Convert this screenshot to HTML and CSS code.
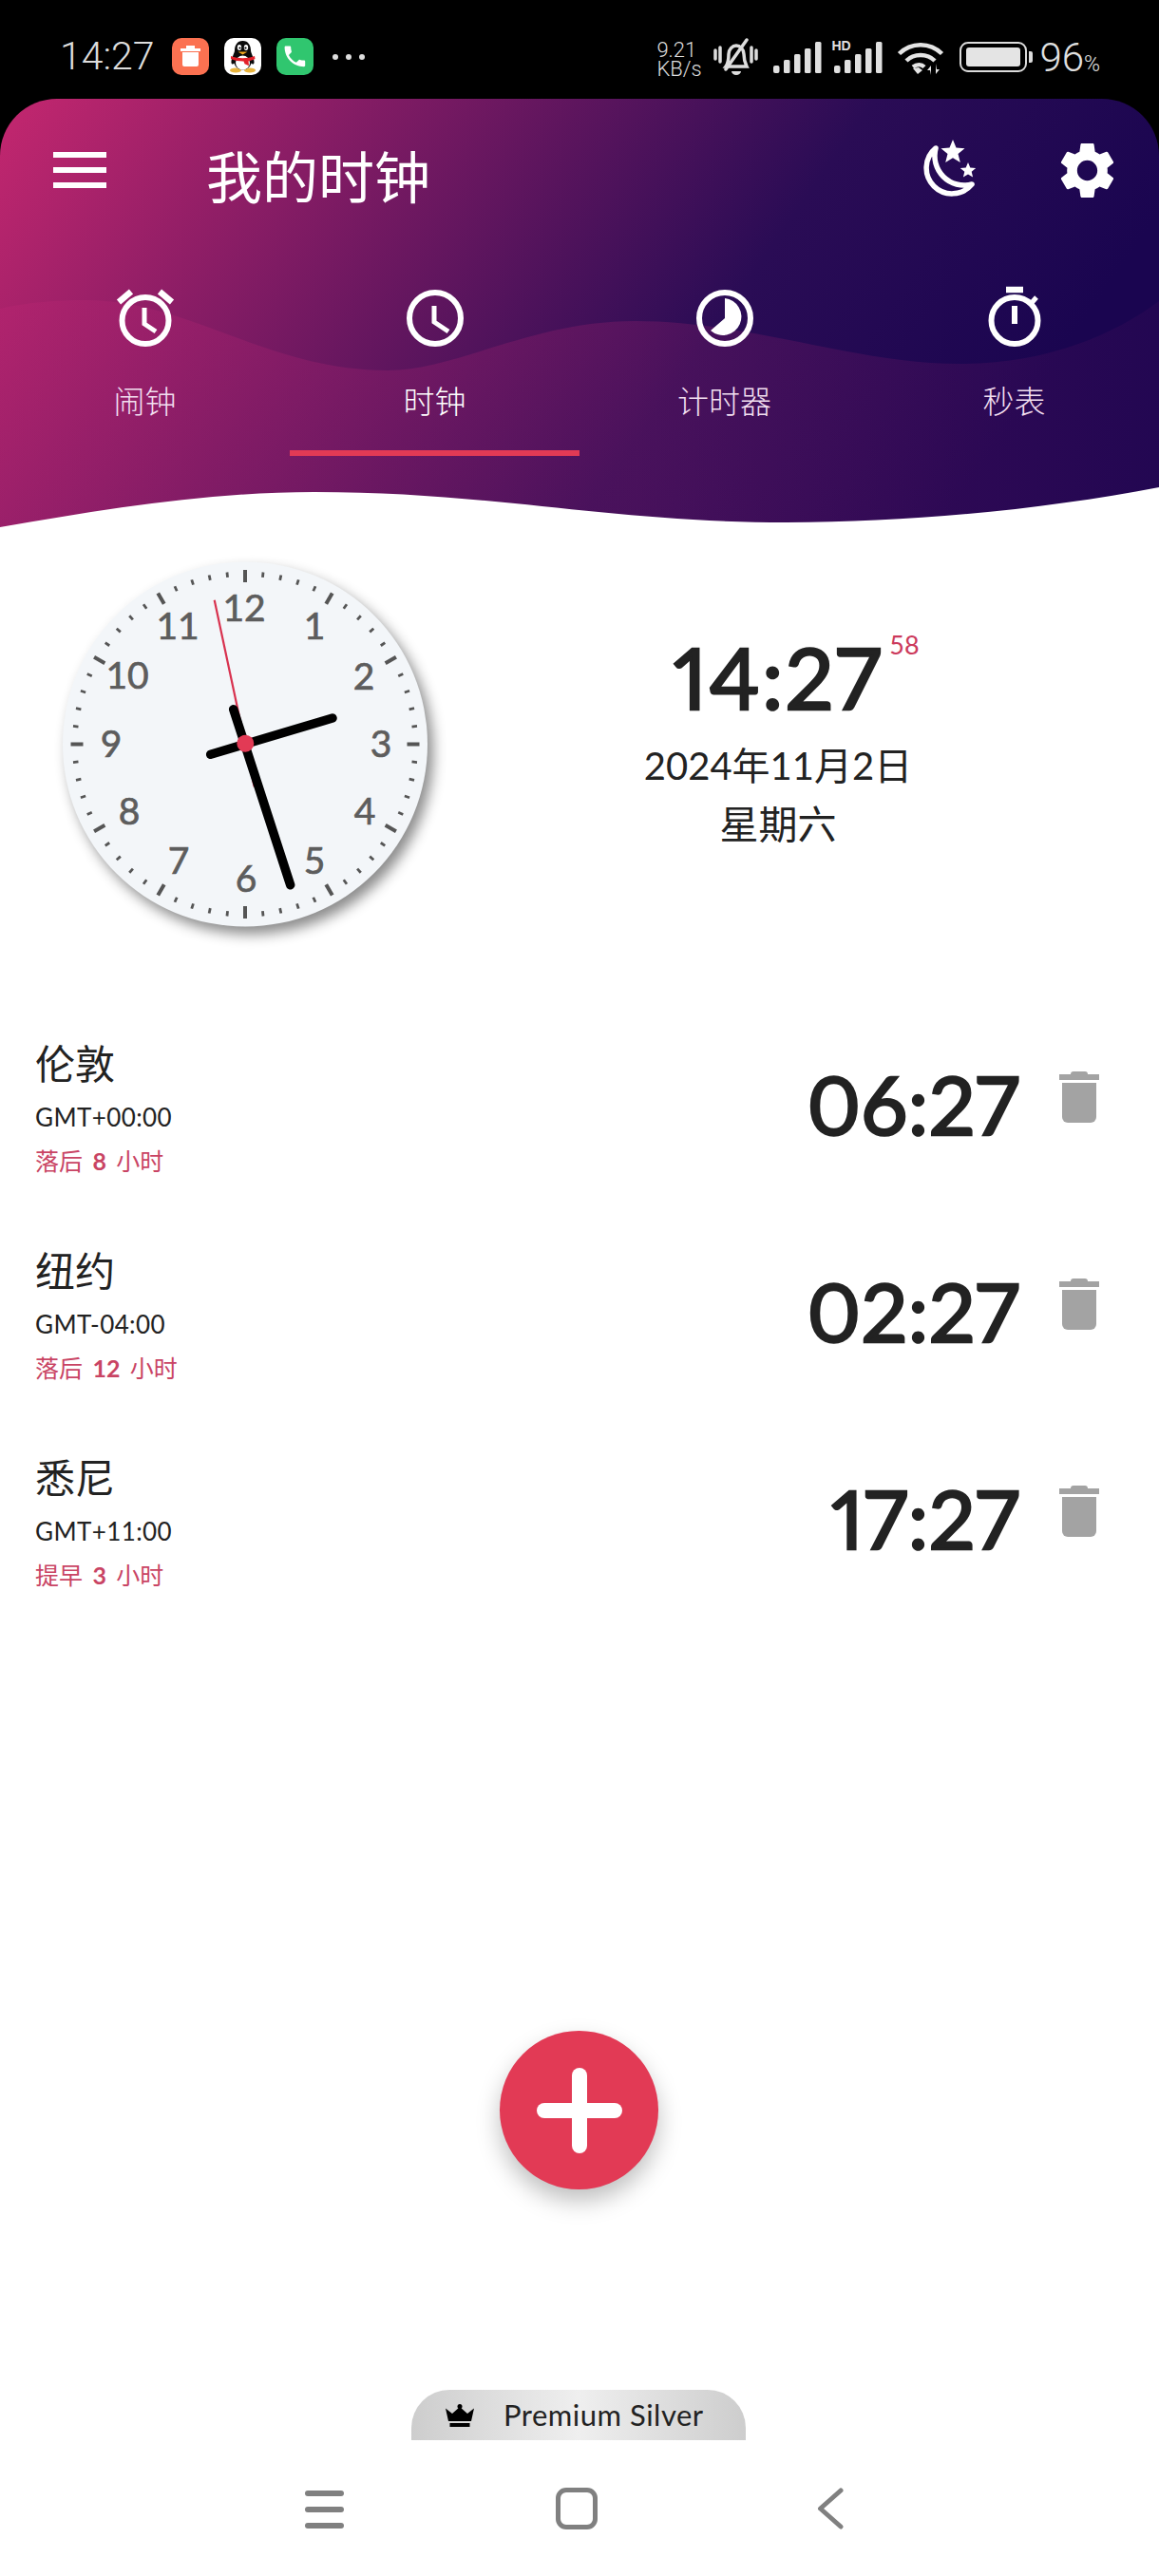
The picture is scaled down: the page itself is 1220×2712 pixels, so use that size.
FILE: index.html
```html
<!DOCTYPE html>
<html lang="zh">
<head>
<meta charset="utf-8">
<title>我的时钟</title>
<link rel="stylesheet" href="styles.css">
</head>
<body>
<div class="phone">
  <div class="top">
  <div class="status">
    <div class="status-left">
      <span class="status-time">14:27</span>
      <div class="apps">
        <svg class="app" viewBox="0 0 39 39"><rect width="39" height="39" rx="10" fill="#fb7151"/><path d="M15 8h9v3h6v3H9v-3h6z" fill="#fff"/><path d="M11 15h17v13a2 2 0 0 1-2 2H13a2 2 0 0 1-2-2z" fill="#fff"/></svg>
        <svg class="app" viewBox="0 0 39 39"><rect width="39" height="39" rx="10" fill="#fff"/><ellipse cx="12" cy="34" rx="6" ry="2.5" fill="#e9b43c"/><ellipse cx="27" cy="34" rx="6" ry="2.5" fill="#e9b43c"/><path d="M19.500 3c6 0 8.500 5 8.500 10 0 3 4 9 3.500 13-.3 2-2 2-3 .5-1 4-4.500 7-9 7s-8-3-9-7c-1 1.500-2.700 1.500-3-.5-.5-4 3.500-10 3.500-13 0-5 2.500-10 8.500-10z" fill="#0b0b0b"/><ellipse cx="19.500" cy="26" rx="7.500" ry="7.500" fill="#fff"/><ellipse cx="16" cy="10" rx="2.200" ry="3" fill="#fff"/><ellipse cx="23" cy="10" rx="2.200" ry="3" fill="#fff"/><circle cx="16.500" cy="10.500" r="1.100" fill="#000"/><circle cx="22.500" cy="10.500" r="1.100" fill="#000"/><path d="M14.500 14.500h10l-5 3z" fill="#f2a81d"/><path d="M7 19c8 3 17 3 25 0l.5 3c-3 1.500-5 2-7 2.300l.5 5-4.500-2-1-2.800c-5 0-9-.5-13.500-2.500z" fill="#e3212b"/></svg>
        <svg class="app" viewBox="0 0 39 39"><rect width="39" height="39" rx="10" fill="#30c66f"/><path transform="translate(5 5) scale(1.200)" d="M6.620 10.790c1.440 2.830 3.760 5.140 6.590 6.590l2.200-2.200c.27-.27.67-.36 1.020-.24 1.120.37 2.330.57 3.570.57.55 0 1 .45 1 1V20c0 .55-.45 1-1 1-9.390 0-17-7.610-17-17 0-.55.45-1 1-1h3.500c.55 0 1 .45 1 1 0 1.250.2 2.450.57 3.570.11.35.03.74-.25 1.020l-2.200 2.200z" fill="#fff"/></svg>
      </div>
      <div class="dots"><i></i><i></i><i></i></div>
    </div>
    <div class="status-right">
      <div class="speed"><span>9.21</span><span>KB/s</span></div>
      <svg class="ic-bell" viewBox="0 0 47 40"><g fill="none" stroke="#ddd" stroke-width="3.500" stroke-linecap="round"><path d="M2 13v9M7 10v15M45 13v9M40 10v15"/><path d="M13 30c3-4 3-8 3-13 0-5 4-9 8-9s8 4 8 9c0 5 1 9 3 13z"/><path d="M13 33 35 2"/></g><path d="M19 35h10a5 4 0 0 1-10 0z" fill="#ddd"/></svg>
      <svg class="ic-signal" viewBox="0 0 51 33"><g fill="#e0e0e0"><rect x="0" y="25" width="6.500" height="8" rx="2"/><rect x="11" y="19" width="6.500" height="14" rx="1.500"/><rect x="22" y="13" width="6.500" height="20" rx="1.500"/><rect x="33" y="7" width="6.500" height="26" rx="1.500"/><rect x="44" y="0" width="6.500" height="33" rx="1.500"/></g></svg>
      <div class="hd-signal"><span class="hd">HD</span><svg class="ic-signal" viewBox="0 0 51 33"><g fill="#e0e0e0"><rect x="0" y="25" width="6.500" height="8" rx="2"/><rect x="11" y="19" width="6.500" height="14" rx="1.500"/><rect x="22" y="13" width="6.500" height="20" rx="1.500"/><rect x="33" y="7" width="6.500" height="26" rx="1.500"/><rect x="44" y="0" width="6.500" height="33" rx="1.500"/></g></svg></div>
      <svg class="ic-wifi" viewBox="0 0 50 36"><g fill="none" stroke="#e4e4e4" stroke-width="4.500"><path d="M2.500 13.500C15 1 35 1 47.500 13.500"/><path d="M10 21c8-8 22-8 30 0"/><path d="M17 27.500c4-3 9-3 12 0"/></g><path d="M17 29l6-1 4 3-5 4z" fill="#e4e4e4"/><path d="M36 36v-10l-4 5h3zM41 24v11l4-5h-3z" fill="#e4e4e4"/></svg>
      <div class="battery"><div class="battery-body"><div class="battery-fill"></div></div><div class="battery-nub"></div></div>
      <div class="pct">96<small>%</small></div>
    </div>
  </div>

  <header class="header">
    <svg class="waves" viewBox="0 0 1220 451" preserveAspectRatio="none">
      <defs>
        <linearGradient id="wave-fade" x1="0" y1="0" x2="1" y2="0">
          <stop offset="0" stop-color="#c82878" stop-opacity=".2"/>
          <stop offset=".55" stop-color="#c82878" stop-opacity=".2"/>
          <stop offset="1" stop-color="#c82878" stop-opacity=".05"/>
        </linearGradient>
      </defs>
      <path d="M0 221C30 214 60 212 90 212 200 212 280 286 408 286 480 286 560 234 668 234 790 234 900 279 1010 279 1100 279 1170 250 1220 213V451H0z" fill="url(#wave-fade)"/>
      <path d="M0 451C110 432 220 414 331 414 520 414 640 446 828 446 960 446 1100 432 1220 409V452H0z" fill="#fff"/>
    </svg>
    <div class="appbar">
      <div class="menu"><i></i><i></i><i></i></div>
      <h1 class="title">我的时钟</h1>
      <div class="actions">
        <svg class="ic-moon" viewBox="0 0 60 64"><path d="M15 9A27 27 0 1 0 53 47 31 31 0 0 1 15 9z" fill="none" stroke="#fff" stroke-width="5.500" stroke-linejoin="round"/><path d="M33 0l3.500 8.500 9 .7-7 5.800 2.300 9-7.800-4.800-7.800 4.800 2.300-9-7-5.800 9-.7z" fill="#fff"/><path d="M49 24l2.300 5.500 5.900.5-4.500 3.800 1.400 5.800-5.100-3.100-5.100 3.100 1.400-5.800-4.500-3.800 5.900-.5z" fill="#fff"/></svg>
        <svg class="ic-gear" viewBox="0 0 24 24"><path d="M19.140 12.940c.04-.3.06-.61.06-.94 0-.32-.02-.64-.07-.94l2.030-1.580c.18-.14.23-.41.12-.61l-1.920-3.320c-.12-.22-.37-.29-.59-.22l-2.390.96c-.5-.38-1.030-.7-1.620-.94l-.36-2.540c-.04-.24-.24-.41-.48-.41h-3.840c-.24 0-.43.17-.47.41l-.36 2.540c-.59.24-1.130.57-1.620.94l-2.390-.96c-.22-.08-.47 0-.59.22L2.740 8.870c-.12.21-.08.47.12.61l2.030 1.580c-.05.3-.09.63-.09.94s.02.64.07.94l-2.030 1.580c-.18.14-.23.41-.12.61l1.920 3.320c.12.22.37.29.59.22l2.390-.96c.5.38 1.030.7 1.620.94l.36 2.540c.05.24.24.41.48.41h3.840c.24 0 .44-.17.47-.41l.36-2.540c.59-.24 1.130-.56 1.620-.94l2.390.96c.22.08.47 0 .59-.22l1.920-3.320c.12-.22.07-.47-.12-.61l-2.010-1.580zM12 15.600c-1.980 0-3.600-1.620-3.600-3.600s1.620-3.600 3.600-3.600 3.600 1.620 3.600 3.600-1.620 3.600-3.600 3.600z" fill="#fff"/></svg>
      </div>
    </div>
    <nav class="tabs">
      <div class="tab">
        <svg class="tab-icon" viewBox="0 0 72 72"><g fill="none" stroke="#fff"><circle cx="36" cy="39.500" r="24.500" stroke-width="6"/><path d="M8 20 21 9M64 20 51 9" stroke-width="6.500"/><path d="M35 26v17l12 8" stroke-width="5"/></g></svg>
        <span class="tab-label">闹钟</span>
      </div>
      <div class="tab tab-active">
        <svg class="tab-icon" viewBox="0 0 72 72"><g fill="none" stroke="#fff"><circle cx="36" cy="37" r="27" stroke-width="6"/><path d="M35 24v17l15 10" stroke-width="5"/></g></svg>
        <span class="tab-label">时钟</span>
      </div>
      <div class="tab">
        <svg class="tab-icon" viewBox="0 0 72 72"><circle cx="36" cy="37" r="27" fill="none" stroke="#fff" stroke-width="6"/><path d="M36 16A19.500 19.500 0 1 1 21 50L36 37z" fill="#fff"/></svg>
        <span class="tab-label">计时器</span>
      </div>
      <div class="tab">
        <svg class="tab-icon" viewBox="0 0 72 72"><g fill="none" stroke="#fff"><circle cx="36" cy="39.500" r="24.500" stroke-width="6"/><path d="M27 7h18" stroke-width="6.500"/><path d="M52 23l7-8" stroke-width="5"/><path d="M36 24v19" stroke-width="6"/></g></svg>
        <span class="tab-label">秒表</span>
      </div>
    </nav>
  </header>
  </div>

  <section class="now">
    <svg class="clock" viewBox="0 0 420 420">
      <defs>
        <rect id="t-h" x="-2" y="-183.500" width="4" height="13"/>
        <rect id="t-m" x="-1.400" y="-182" width="2.800" height="5.500"/>
      </defs>
      <circle class="face" cx="210" cy="210.500" r="192"/>
      <g class="ticks" transform="translate(210 210.500)">
        <use href="#t-h"/><use href="#t-h" transform="rotate(30)"/><use href="#t-h" transform="rotate(60)"/><use href="#t-h" transform="rotate(90)"/><use href="#t-h" transform="rotate(120)"/><use href="#t-h" transform="rotate(150)"/><use href="#t-h" transform="rotate(180)"/><use href="#t-h" transform="rotate(210)"/><use href="#t-h" transform="rotate(240)"/><use href="#t-h" transform="rotate(270)"/><use href="#t-h" transform="rotate(300)"/><use href="#t-h" transform="rotate(330)"/>
        <use href="#t-m" transform="rotate(6)"/><use href="#t-m" transform="rotate(12)"/><use href="#t-m" transform="rotate(18)"/><use href="#t-m" transform="rotate(24)"/>
        <use href="#t-m" transform="rotate(36)"/><use href="#t-m" transform="rotate(42)"/><use href="#t-m" transform="rotate(48)"/><use href="#t-m" transform="rotate(54)"/>
        <use href="#t-m" transform="rotate(66)"/><use href="#t-m" transform="rotate(72)"/><use href="#t-m" transform="rotate(78)"/><use href="#t-m" transform="rotate(84)"/>
        <use href="#t-m" transform="rotate(96)"/><use href="#t-m" transform="rotate(102)"/><use href="#t-m" transform="rotate(108)"/><use href="#t-m" transform="rotate(114)"/>
        <use href="#t-m" transform="rotate(126)"/><use href="#t-m" transform="rotate(132)"/><use href="#t-m" transform="rotate(138)"/><use href="#t-m" transform="rotate(144)"/>
        <use href="#t-m" transform="rotate(156)"/><use href="#t-m" transform="rotate(162)"/><use href="#t-m" transform="rotate(168)"/><use href="#t-m" transform="rotate(174)"/>
        <use href="#t-m" transform="rotate(186)"/><use href="#t-m" transform="rotate(192)"/><use href="#t-m" transform="rotate(198)"/><use href="#t-m" transform="rotate(204)"/>
        <use href="#t-m" transform="rotate(216)"/><use href="#t-m" transform="rotate(222)"/><use href="#t-m" transform="rotate(228)"/><use href="#t-m" transform="rotate(234)"/>
        <use href="#t-m" transform="rotate(246)"/><use href="#t-m" transform="rotate(252)"/><use href="#t-m" transform="rotate(258)"/><use href="#t-m" transform="rotate(264)"/>
        <use href="#t-m" transform="rotate(276)"/><use href="#t-m" transform="rotate(282)"/><use href="#t-m" transform="rotate(288)"/><use href="#t-m" transform="rotate(294)"/>
        <use href="#t-m" transform="rotate(306)"/><use href="#t-m" transform="rotate(312)"/><use href="#t-m" transform="rotate(318)"/><use href="#t-m" transform="rotate(324)"/>
        <use href="#t-m" transform="rotate(336)"/><use href="#t-m" transform="rotate(342)"/><use href="#t-m" transform="rotate(348)"/><use href="#t-m" transform="rotate(354)"/>
      </g>
      <g class="nums">
        <text x="209" y="81">12</text><text x="283" y="100">1</text><text x="335" y="153">2</text><text x="353" y="224">3</text><text x="336" y="295">4</text><text x="283" y="347">5</text><text x="211" y="366">6</text><text x="140" y="347">7</text><text x="88" y="295">8</text><text x="69" y="224">9</text><text x="86" y="152">10</text><text x="139" y="100">11</text>
      </g>
      <line class="hand-s" x1="177.700" y1="58.700" x2="219.700" y2="255.300"/>
      <line class="hand" x1="173.700" y1="221.300" x2="302" y2="183"/>
      <line class="hand hand-m" x1="197.700" y1="173.700" x2="257.700" y2="358.700"/>
      <circle class="hub" cx="210.300" cy="209.700" r="9"/>
    </svg>
    <div class="digital">
      <div class="big-time">14:27<span class="secs">58</span></div>
      <div class="date">2024年11月2日</div>
      <div class="weekday">星期六</div>
    </div>
  </section>

  <section class="cities">
    <div class="city">
      <div class="city-info"><div class="city-name">伦敦</div><div class="gmt">GMT+00:00</div><div class="diff">落后 <b>8</b> 小时</div></div>
      <div class="city-time">06:27</div>
      <svg class="trash" viewBox="0 0 42 54"><path d="M12 3a3 3 0 0 1 3-3h12a3 3 0 0 1 3 3h12v6H0V3z" fill="#a3a3a3"/><path d="M3 12h36v36a6 6 0 0 1-6 6H9a6 6 0 0 1-6-6z" fill="#a3a3a3"/></svg>
    </div>
    <div class="city">
      <div class="city-info"><div class="city-name">纽约</div><div class="gmt">GMT-04:00</div><div class="diff">落后 <b>12</b> 小时</div></div>
      <div class="city-time">02:27</div>
      <svg class="trash" viewBox="0 0 42 54"><path d="M12 3a3 3 0 0 1 3-3h12a3 3 0 0 1 3 3h12v6H0V3z" fill="#a3a3a3"/><path d="M3 12h36v36a6 6 0 0 1-6 6H9a6 6 0 0 1-6-6z" fill="#a3a3a3"/></svg>
    </div>
    <div class="city">
      <div class="city-info"><div class="city-name">悉尼</div><div class="gmt">GMT+11:00</div><div class="diff">提早 <b>3</b> 小时</div></div>
      <div class="city-time">17:27</div>
      <svg class="trash" viewBox="0 0 42 54"><path d="M12 3a3 3 0 0 1 3-3h12a3 3 0 0 1 3 3h12v6H0V3z" fill="#a3a3a3"/><path d="M3 12h36v36a6 6 0 0 1-6 6H9a6 6 0 0 1-6-6z" fill="#a3a3a3"/></svg>
    </div>
  </section>

  <div class="fab"><i class="fab-h"></i><i class="fab-v"></i></div>

  <div class="premium">
    <svg class="crown" viewBox="0 0 30 24"><circle cx="15" cy="2.500" r="2.500"/><path d="M0 4.500l7 5.500 8-7 8 7 7-5.500-3 13.500H3z"/><rect x="4.500" y="20" width="21" height="4"/></svg>
    <span>Premium Silver</span>
  </div>

  <div class="navbar">
    <div class="nav-menu"><i></i><i></i><i></i></div>
    <div class="nav-home"></div>
    <svg class="nav-back" viewBox="0 0 28 44"><path d="M25 3 3.500 22 25 41" fill="none" stroke="#808080" stroke-width="5" stroke-linecap="round" stroke-linejoin="round"/></svg>
  </div>
</div>
</body>
</html>
```

FILE: styles.css
```css
* { box-sizing: border-box; }
html, body { margin: 0; padding: 0; background: #fff; }
body { font-family: "Lato", "Noto Sans CJK SC", sans-serif; color: #222; }
.phone { width: 1220px; height: 2712px; display: flex; flex-direction: column; overflow: hidden; }
.top { background: #000; flex: none; }

/* status bar */
.status { height: 104px; background: #000; display: flex; justify-content: space-between; align-items: flex-start; padding: 40px 62px 0 63px; color: #ddd; }
.status-left { display: flex; align-items: center; height: 39px; }
.status-time { font: 300 41px/41px "Roboto", sans-serif; color: #ddd; width: 118px; }
.apps { display: flex; gap: 16px; }
.app { width: 39px; height: 39px; display: block; }
.dots { display: flex; gap: 8px; margin-left: 20px; }
.dots i { width: 6px; height: 6px; border-radius: 50%; background: #ddd; }
.status-right { display: flex; align-items: flex-start; }
.speed { display: flex; flex-direction: column; font: 300 22px/20px "Roboto", sans-serif; width: 60px; margin-top: 3px; }
.ic-bell { width: 47px; height: 40px; display: block; }
.ic-signal { width: 51px; height: 33px; display: block; }
.status-right > .ic-signal { margin: 4px 0 0 16px; }
.hd-signal { position: relative; margin: 4px 0 0 13px; }
.hd { position: absolute; left: -3px; top: -2px; font: 700 14px/13px "Liberation Sans", sans-serif; color: #e0e0e0; background: #000; padding-right: 1px; }
.ic-wifi { width: 50px; height: 36px; display: block; margin: 3px 0 0 15px; }
.battery { display: flex; align-items: center; margin: 4px 0 0 16px; }
.battery-body { width: 71px; height: 32px; border: 2.5px solid #dcdcdc; border-radius: 9px; padding: 4px 5px; }
.battery-fill { width: 100%; height: 100%; background: #e4e4e4; border-radius: 3px; }
.battery-nub { width: 4px; height: 12px; background: #dcdcdc; margin-left: 2px; border-radius: 0 2px 2px 0; }
.pct { font: 300 42px/40px "Roboto", sans-serif; margin: 1px 0 0 7px; white-space: nowrap; color: #e0e0e0; }
.pct small { font-size: 23px; }

/* header */
.header { position: relative; height: 451px; background: linear-gradient(125deg, #c4276f 0%, #2a0c55 60%, #1a0550 85%); border-radius: 60px 60px 0 0; overflow: hidden; }
.waves { position: absolute; left: 0; top: 0; width: 1220px; height: 451px; }
.appbar { position: relative; display: flex; align-items: center; height: 150px; padding: 0 41px 0 56px; }
.menu { display: flex; flex-direction: column; gap: 10px; width: 56px; }
.menu i { height: 6px; background: #fff; display: block; }
.title { margin: 9px 0 0 105px; font: 400 59px/70px "Noto Sans CJK SC", sans-serif; color: #fff; flex: 1; }
.actions { display: flex; align-items: center; gap: 79px; }
.ic-moon { width: 60px; height: 64px; display: block; }
.ic-gear { width: 71px; height: 71px; display: block; margin-right: -1px; }
.tabs { position: relative; display: grid; grid-template-columns: repeat(4, 305px); height: 182px; margin-top: 44px; }
.tab { display: flex; flex-direction: column; align-items: center; height: 176px; }
.tab-active { border-bottom: 6px solid #e23a55; height: 182px; }
.tab-icon { width: 72px; height: 72px; display: block; }
.tab-label { font: 300 33px/40px "Noto Sans CJK SC", sans-serif; color: #f2dff0; margin-top: 31px; }
.tab-active .tab-label { color: #fff; }

/* now */
.now { display: flex; padding: 18px 0 0 48px; height: 538px; flex: none; }
.clock { width: 420px; height: 420px; display: block; flex: none; overflow: visible; }
.face { fill: #f3f6f9; filter: drop-shadow(6px 8px 7px rgba(0,0,0,.45)); }
.ticks { fill: #555; }
.nums text { font: 400 39px "Lato", sans-serif; fill: #5d5d5d; stroke: #5d5d5d; stroke-width: .7px; text-anchor: middle; }
.hand { stroke: #000; stroke-width: 9.500; stroke-linecap: round; }
.hand-s { stroke: #d8324f; stroke-width: 2.200; }
.hub { fill: #e23a55; }
.digital { flex: 1; padding: 84px 50px 0 0; display: flex; flex-direction: column; align-items: center; }
.big-time { position: relative; font: 400 90px/110px "Lato", sans-serif; font-variant-numeric: proportional-nums; letter-spacing: 2px; -webkit-text-stroke: 2.5px #222; color: #222; }
.secs { position: absolute; left: 100%; top: 7px; margin-left: 7px; font: 400 27px/30px "Lato", sans-serif; letter-spacing: 0; -webkit-text-stroke: 0; color: #cc3a5c; }
.date { font: 400 40px/50px "Lato", "Noto Sans CJK SC", sans-serif; margin-top: 14px; }
.weekday { font: 400 41px/50px "Noto Sans CJK SC", sans-serif; margin-top: 9px; }

/* cities */
.cities { display: flex; flex-direction: column; }
.city { display: flex; align-items: flex-start; height: 218px; padding: 0 63px 0 37px; }
.city-info { flex: 1; }
.city-name { font: 400 42px/50px "Noto Sans CJK SC", sans-serif; color: #222; }
.gmt { font: 400 26px/40px "Lato", sans-serif; letter-spacing: .4px; margin-top: 13px; color: #222; }
.diff { font: 400 25px/40px "Lato", "Noto Sans CJK SC", sans-serif; word-spacing: 4px; color: #c94464; margin-top: 6px; }
.diff b { font-weight: 700; }
.city-time { font: 400 86px/110px "Lato", sans-serif; font-variant-numeric: proportional-nums; letter-spacing: .5px; -webkit-text-stroke: 2.5px #222; color: #222; margin: 14px 42px 0 0; }
.trash { width: 42px; height: 54px; display: block; margin-top: 35px; }

/* fab */
.fab { position: relative; width: 167px; height: 167px; flex: none; border-radius: 50%; background: #e23a55; margin: 391px 0 0 526px; box-shadow: 0 12px 24px rgba(0,0,0,.25); }
.fab-h, .fab-v { position: absolute; background: #fff; border-radius: 8px; }
.fab-h { left: 39px; top: 76px; width: 90px; height: 16px; }
.fab-v { left: 76px; top: 39px; width: 16px; height: 90px; }

/* premium */
.premium { width: 352px; height: 53px; flex: none; margin: 211px 0 0 433px; border-radius: 40px 40px 0 0; background: linear-gradient(90deg, #cdcdcd, #efefef 50%, #cdcdcd); display: flex; align-items: center; padding-left: 36px; gap: 31px; font: 400 31px/53px "Lato", sans-serif; letter-spacing: .5px; color: #222; }
.crown { width: 30px; height: 24px; display: block; fill: #000; }

/* nav */
.navbar { position: relative; height: 143px; flex: none; display: flex; align-items: flex-start; padding: 50px 0 0 321px; }
.nav-menu { display: flex; flex-direction: column; gap: 11px; width: 41px; margin-top: 3px; }
.nav-menu i { height: 6px; border-radius: 3px; background: #808080; display: block; }
.nav-home { width: 44px; height: 44px; border: 5px solid #808080; border-radius: 11px; margin-left: 223px; }
.nav-back { width: 28px; height: 44px; display: block; margin-left: 231px; }
```
